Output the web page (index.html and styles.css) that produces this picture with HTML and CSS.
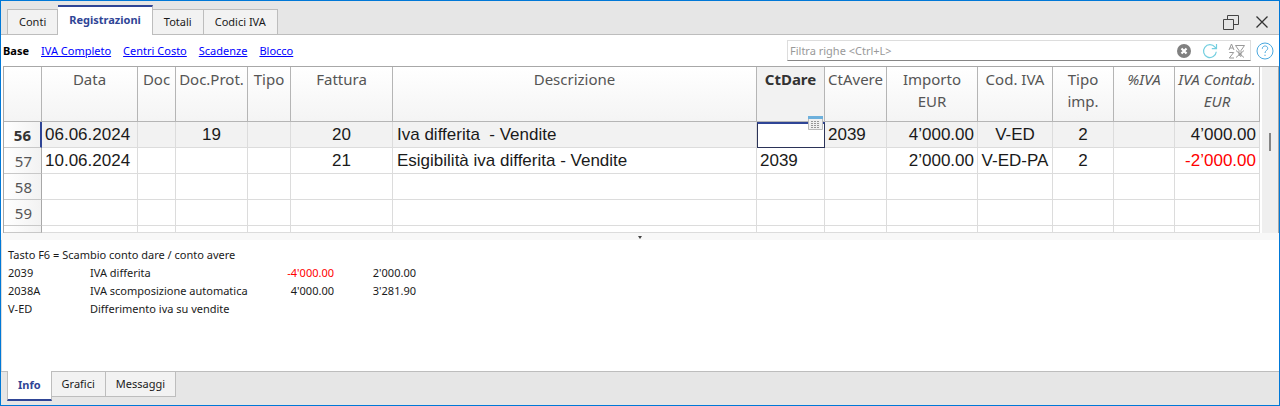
FILE: index.html
```
<!DOCTYPE html>
<html lang="it">
<head>
<meta charset="utf-8">
<title>Registrazioni</title>
<link rel="stylesheet" href="styles.css">
</head>
<body>
<div class="app">
  <header class="tabbar">
    <nav class="tabs" aria-label="Tabelle">
      <button class="tab">Conti</button>
      <button class="tab tab-active">Registrazioni</button>
      <button class="tab">Totali</button>
      <button class="tab">Codici IVA</button>
    </nav>
    <div class="window-buttons">
      <button class="icon-button" aria-label="Ripristina">
        <svg width="16" height="16" viewBox="0 0 16 16" fill="none" stroke="#444"><path d="M.5 5.500h10v10H.5zM4.500 5.500v-4h11v9h-5"/></svg>
      </button>
      <button class="icon-button" aria-label="Chiudi">
        <svg width="14" height="14" viewBox="0 0 14 14" fill="none" stroke="#333" stroke-width="1.300"><path d="M1.500 1.500l11 11M12.500 1.500l-11 11"/></svg>
      </button>
    </div>
  </header>

  <div class="toolbar">
    <nav class="views" aria-label="Viste">
      <strong>Base</strong>
      <a href="#">IVA Completo</a>
      <a href="#">Centri Costo</a>
      <a href="#">Scadenze</a>
      <a href="#">Blocco</a>
    </nav>
    <div class="search">
      <div class="filter">
        <input class="filter-input" type="text" placeholder="Filtra righe &lt;Ctrl+L&gt;" aria-label="Filtra righe">
        <button class="icon-button" aria-label="Cancella filtro">
          <svg width="16" height="16" viewBox="0 0 16 16"><circle cx="8" cy="8" r="7" fill="#808080"/><path d="M5.500 5.500l5 5M10.500 5.500l-5 5" stroke="#fff" stroke-width="2.200"/></svg>
        </button>
        <button class="icon-button" aria-label="Aggiorna">
          <svg width="16" height="16" viewBox="0 0 16 16" fill="none" stroke="#74cfe0" stroke-width="1.200"><path d="M14.300 8.800a6.400 6.400 0 1 1-1.300-4.600l1.300 1.300M14.500 1v4.700H9.800"/></svg>
        </button>
        <button class="icon-button" aria-label="Ordina e filtra">
          <svg width="18" height="16" viewBox="0 0 18 16" fill="none" stroke="#999"><path d="M1 7l2.500-6L6 7M2 5h3M1.300 9.500h4.400l-4.400 5.500h4.700M7.500 2.500h9l-3.500 5v6l-2-1.500V7.500zM8 7.500l8 7M16 7.500l-8 7"/></svg>
        </button>
      </div>
      <button class="icon-button" aria-label="Aiuto">
        <svg width="18" height="18" viewBox="0 0 18 18" fill="none" stroke="#4aa8df"><circle cx="9" cy="9" r="8"/><path d="M6.300 6.800c0-3.700 5.400-3.700 5.400-.4 0 2-2.700 2.300-2.700 4.600M9 12.700v1.300"/></svg>
      </button>
    </div>
  </div>

  <main class="grid-area">
    <table class="grid">
      <colgroup>
        <col class="w-num"><col class="w-date"><col class="w-doc"><col class="w-prot"><col class="w-type"><col class="w-invoice"><col>
        <col class="w-debit"><col class="w-credit"><col class="w-amount"><col class="w-code"><col class="w-small"><col class="w-small"><col class="w-vat">
      </colgroup>
      <thead>
        <tr>
          <th aria-label="Riga"></th><th>Data</th><th>Doc</th><th>Doc.Prot.</th><th>Tipo</th><th>Fattura</th><th>Descrizione</th>
          <th class="current">CtDare</th><th>CtAvere</th><th>Importo<br>EUR</th><th>Cod. IVA</th><th>Tipo<br>imp.</th><th class="computed">%IVA</th><th class="computed">IVA Contab.<br>EUR</th>
        </tr>
      </thead>
      <tbody>
        <tr class="row-current">
          <th scope="row">56</th><td>06.06.2024</td><td></td><td class="center">19</td><td></td><td class="center">20</td><td class="text">Iva differita&nbsp; - Vendite</td>
          <td class="selected"><svg class="picker" width="15" height="14" viewBox="0 0 15 14"><path fill="#f1f1f1" stroke="#bbb" d="M.5.5h14v13H.5z"/><path fill="#6db0dc" d="M0 0h15v3H0z"/><path fill="none" stroke="#999" d="M3 5.500h9M3 7.500h9M3 9.500h9M3 11.500h9" stroke-dasharray="2 1"/></svg></td>
          <td>2039</td><td class="number">4’000.00</td><td class="center">V-ED</td><td class="center">2</td><td></td><td class="number">4’000.00</td>
        </tr>
        <tr>
          <th scope="row">57</th><td>10.06.2024</td><td></td><td></td><td></td><td class="center">21</td><td class="text">Esigibilità iva differita - Vendite</td>
          <td>2039</td><td></td><td class="number">2’000.00</td><td class="center">V-ED-PA</td><td class="center">2</td><td></td><td class="number negative">-2’000.00</td>
        </tr>
        <tr><th scope="row">58</th><td></td><td></td><td></td><td></td><td></td><td></td><td></td><td></td><td></td><td></td><td></td><td></td><td></td></tr>
        <tr><th scope="row">59</th><td></td><td></td><td></td><td></td><td></td><td></td><td></td><td></td><td></td><td></td><td></td><td></td><td></td></tr>
        <tr class="row-cut"><th></th><td></td><td></td><td></td><td></td><td></td><td></td><td></td><td></td><td></td><td></td><td></td><td></td><td></td></tr>
      </tbody>
    </table>
    <div class="scrollbar"><div class="thumb"></div></div>
  </main>

  <div class="splitter"><svg width="4" height="3" viewBox="0 0 4 3"><path d="M0 0h4L2 3z" fill="#444"/></svg></div>

  <section class="info">
    <p>Tasto F6 = Scambio conto dare / conto avere</p>
    <table class="balances">
      <tr><td class="b-account">2039</td><td class="b-name">IVA differita</td><td class="b-value negative">-4'000.00</td><td class="b-value">2'000.00</td></tr>
      <tr><td>2038A</td><td>IVA scomposizione automatica</td><td class="b-value">4'000.00</td><td class="b-value">3'281.90</td></tr>
      <tr><td>V-ED</td><td>Differimento iva su vendite</td><td></td><td></td></tr>
    </table>
  </section>

  <footer class="bottom-tabs">
    <button class="btab btab-active">Info</button>
    <button class="btab">Grafici</button>
    <button class="btab">Messaggi</button>
  </footer>
</div>
</body>
</html>
```
FILE: styles.css
```
* { box-sizing: border-box; }
body { margin: 0; font: 11px/18px "Noto Sans", "Open Sans", sans-serif; color: #1a1a1a; background: #fff; }
button { font: inherit; color: inherit; cursor: pointer; }
p { margin: 0; }

.app { display: flex; flex-direction: column; min-height: 100vh; border: 1px solid #0078d7; }

.tabbar { display: flex; justify-content: space-between; align-items: flex-end; height: 34px; padding: 0 10px 0 6px; background: #e6e6e6; border-bottom: 1px solid #bdbdbd; }
.tabs { display: flex; align-items: flex-end; }
.tab { height: 25px; padding: 0 11px; border: 1px solid #bdbdbd; border-bottom: 0; border-left-width: 0; background: #f2f2f2; white-space: nowrap; }
.tab:first-child { border-left-width: 1px; }
.tab-active { height: 30px; margin-bottom: -1px; padding-bottom: 2px; background: #fff; border-top: 2px solid #2f4596; color: #2f4596; font-weight: 700; }
.window-buttons { display: flex; align-items: center; gap: 16px; padding-bottom: 4px; }
.icon-button { display: flex; padding: 0; border: 0; background: none; }

.toolbar { display: flex; justify-content: space-between; align-items: center; height: 31px; padding: 0 5px 0 2px; }
.views { display: flex; gap: 12px; white-space: nowrap; }
.views strong { color: #000; }
.views a { color: #0000ff; }
.search { display: flex; align-items: center; gap: 5px; width: 487px; }
.filter { display: flex; align-items: center; flex: 1; gap: 10px; height: 21px; padding-right: 4px; border: 1px solid #ddd; border-bottom-color: #868686; }
.filter-input { flex: 1; min-width: 0; padding: 2px; border: 0; outline: 0; background: none; font: inherit; }
.filter-input::placeholder { color: #999; }

.grid-area { display: flex; margin-left: 2px; border: 1px solid #a8a8a8; border-bottom: 0; }
.grid { flex: 1; width: 100%; table-layout: fixed; border-collapse: separate; border-spacing: 0; font: 17px/20px "Liberation Sans", Arial, sans-serif; }
.w-num { width: 38px; }
.w-date { width: 96px; }
.w-doc { width: 38px; }
.w-prot { width: 72px; }
.w-type { width: 43px; }
.w-invoice { width: 102px; }
.w-debit { width: 68px; }
.w-credit { width: 62px; }
.w-amount { width: 91px; }
.w-code { width: 75px; }
.w-small { width: 61px; }
.w-vat { width: 85px; }
.grid th { padding: 0; font: 15px/22px "Noto Sans", "Open Sans", sans-serif; color: #555; white-space: nowrap; }
.grid thead th { height: 55px; padding-top: 1px; vertical-align: top; background: linear-gradient(#fff, #f4f4f4); border-right: 1px solid #b5b5b5; border-bottom: 1px solid #b5b5b5; }
.grid thead .current { background: #f2f2f2; color: #333; font-weight: 700; }
.grid thead .computed { font-style: italic; }
.grid td { height: 26px; padding: 0 3px; border-right: 1px solid #dcdcdc; border-bottom: 1px solid #dcdcdc; white-space: nowrap; }
.grid tbody th { height: 26px; padding-right: 9px; text-align: right; background: linear-gradient(90deg, #fff, #f2f2f2); border-right: 1px solid #a8a8a8; border-bottom: 1px solid #c8c8c8; }
.grid .row-current td { background: #f2f2f2; }
.grid .row-current th { color: #333; font-weight: 700; border-right: 2px solid #2f4596; }
.grid .row-current .selected { position: relative; background: #fff; border: 1px solid #2b3358; border-top: 2px solid #2f4596; }
.picker { position: absolute; top: -8px; right: 1px; }
.grid .row-cut td, .grid .row-cut th { height: 7px; padding: 0; }
.grid .center { padding: 0; text-align: center; }
.grid .text { padding-left: 4px; }
.grid .number { text-align: right; }
.grid .negative, .balances .negative { color: #ff0000; }
.scrollbar { flex: none; display: flex; justify-content: center; align-items: center; width: 16px; margin-left: 2px; padding-bottom: 16px; background: #efefef; }
.thumb { width: 2px; height: 18px; background: #858585; }

.splitter { display: flex; justify-content: center; height: 7px; padding-top: 3px; background: #f8f8f8; }

.info { flex: 1; padding: 6px 6px 0; border-left: 1px solid #ddd; }
.balances { border-spacing: 0; }
.balances td { padding: 0; }
.b-account { width: 82px; }
.b-name { width: 162px; }
.b-value { width: 82px; text-align: right; }

.bottom-tabs { display: flex; align-items: flex-start; height: 34px; padding-left: 6px; background: #e6e6e6; border-top: 1px solid #bdbdbd; }
.btab { height: 25px; padding: 0 10px; border: 1px solid #bdbdbd; border-top: 0; border-left: 0; background: #f2f2f2; }
.btab-active { height: 30px; margin-top: -1px; background: #fff; border-left: 1px solid #bdbdbd; border-bottom: 2px solid #2f4596; color: #2f4596; font-weight: 700; }
```
